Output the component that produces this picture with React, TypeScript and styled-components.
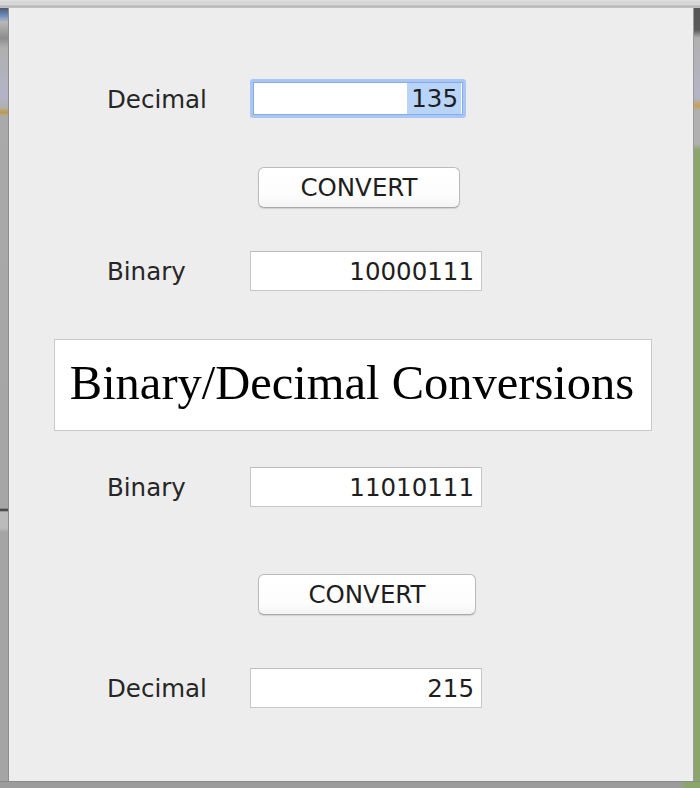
import React from "react";
import styled, { createGlobalStyle } from "styled-components";

const Global = createGlobalStyle`
  html, body { margin: 0; padding: 0; }
  body { width: 700px; height: 788px; overflow: hidden; background: #a9a9a9; }
  #root { width: 700px; height: 788px; }
`;

const Screen = styled.div`
  display: flex;
  flex-direction: column;
  width: 700px;
  height: 788px;
  background: #a9a9a9;
`;

const TopEdge = styled.div`
  height: 8px;
  flex: none;
  background: linear-gradient(to bottom, #e2e2e2 0, #d4d4d4 2px, #d8d8d8 5px, #b4b4b4 6px, #c4c4c4 8px);
`;

const Middle = styled.div`
  flex: 1;
  display: flex;
  min-height: 0;
`;

const LeftEdge = styled.div`
  width: 8px;
  flex: none;
  background: linear-gradient(
    to bottom,
    #4d5a70 0, #6f8fc0 8px, #b9b9b9 14px, #8c8c8c 30px, #b0b0b0 40px,
    #b3b3c8 88px, #b0b0b0 100px, #c09a40 104px, #aaaaaa 108px,
    #a5a5a5 500px, #2a2a2a 502px, #bbbbbb 504px, #bbbbbb 520px, #a5a5a5 524px, #a5a5a5 100%
  );
  border-right: 1px solid #8e8e8e;
`;

const RightEdge = styled.div`
  width: 6px;
  flex: none;
  background: linear-gradient(
    to bottom,
    #555555 0, #5a5a5a 22px, #b0b0b0 30px, #b4b4c8 90px, #c8a050 98px, #b0b0b0 102px,
    #b0b0b0 136px, #8ba66b 142px, #8ba66b 100%
  );
  border-left: 1px solid #9a9a9a;
`;

const Panel = styled.div`
  flex: 1;
  background: #ededed;
  display: flex;
  flex-direction: column;
  padding: 71px 0 0 45px;
  box-sizing: border-box;
  font-family: "DejaVu Sans", "Liberation Sans", sans-serif;
  color: #222;
`;

const BottomEdge = styled.div`
  height: 6px;
  flex: none;
  background: linear-gradient(to right, #9c9c9c 0, #9c9c9c 97%, #8ba66b 98%, #8ba66b 100%);
  border-top: 1px solid #8a8a8a;
`;

const Row = styled.div<{ $top: number }>`
  display: flex;
  align-items: center;
  margin-top: ${(p) => p.$top}px;
  padding-left: 53px;
`;

const Label = styled.div`
  width: 143px;
  flex: none;
  font-size: 24.5px;
  line-height: 28px;
  color: #262626;
  padding-top: 2px;
`;

const Field = styled.div<{ $w: number }>`
  width: ${(p) => p.$w}px;
  height: 40px;
  box-sizing: border-box;
  background: #fff;
  border: 1px solid #c7c7c7;
  border-top-color: #bdbdbd;
  display: flex;
  align-items: center;
  justify-content: flex-end;
  padding-right: 7px;
  font-size: 24.5px;
  color: #1e1e1e;
`;

const FocusField = styled.div<{ $w: number }>`
  width: ${(p) => p.$w}px;
  height: 39px;
  box-sizing: border-box;
  background: #fff;
  border: 3px solid #a9c6f4;
  border-radius: 3px;
  box-shadow: inset 0 0 0 1px #86abe8;
  display: flex;
  align-items: stretch;
  justify-content: flex-end;
  padding: 1px 2px 1px 0;
  font-size: 24.5px;
  color: #1e1e1e;
`;

const Selected = styled.span`
  background: #b8d4f9;
  display: flex;
  align-items: center;
  padding: 0 3px 0 4px;
`;

const ButtonRow = styled.div<{ $top: number }>`
  margin-top: ${(p) => p.$top}px;
  padding-left: 204px;
  display: flex;
`;

const Button = styled.button<{ $w: number }>`
  width: ${(p) => p.$w}px;
  height: 41px;
  box-sizing: border-box;
  background: linear-gradient(to bottom, #ffffff 0%, #fdfdfd 70%, #f4f4f4 100%);
  border: 1px solid #bcbcbc;
  border-bottom-color: #a9a9a9;
  border-radius: 6px;
  box-shadow: 0 1px 1px rgba(0, 0, 0, 0.12);
  font-family: "DejaVu Sans", "Liberation Sans", sans-serif;
  font-size: 24.5px;
  color: #1e1e1e;
  padding: 0;
  display: flex;
  align-items: center;
  justify-content: center;
`;

const TitleBox = styled.div`
  margin-top: 48px;
  width: 598px;
  height: 92px;
  box-sizing: border-box;
  background: #fff;
  border: 1px solid #c9c9c9;
  display: flex;
  align-items: center;
  justify-content: center;
  font-family: "Liberation Serif", "Times New Roman", serif;
  font-size: 48.5px;
  color: #000;
  padding: 0 2px 6px 0;
`;

export default function App() {
  return (
    <>
      <Global />
      <Screen>
        <TopEdge />
        <Middle>
          <LeftEdge />
          <Panel>
            <Row $top={0}>
              <Label>Decimal</Label>
              <FocusField $w={216}>
                <Selected>135</Selected>
              </FocusField>
            </Row>
            <ButtonRow $top={49}>
              <Button $w={202}>CONVERT</Button>
            </ButtonRow>
            <Row $top={43}>
              <Label>Binary</Label>
              <Field $w={232}>10000111</Field>
            </Row>
            <TitleBox>Binary/Decimal Conversions</TitleBox>
            <Row $top={36}>
              <Label>Binary</Label>
              <Field $w={232}>11010111</Field>
            </Row>
            <ButtonRow $top={67}>
              <Button $w={218}>CONVERT</Button>
            </ButtonRow>
            <Row $top={53}>
              <Label>Decimal</Label>
              <Field $w={232}>215</Field>
            </Row>
          </Panel>
          <RightEdge />
        </Middle>
        <BottomEdge />
      </Screen>
    </>
  );
}
